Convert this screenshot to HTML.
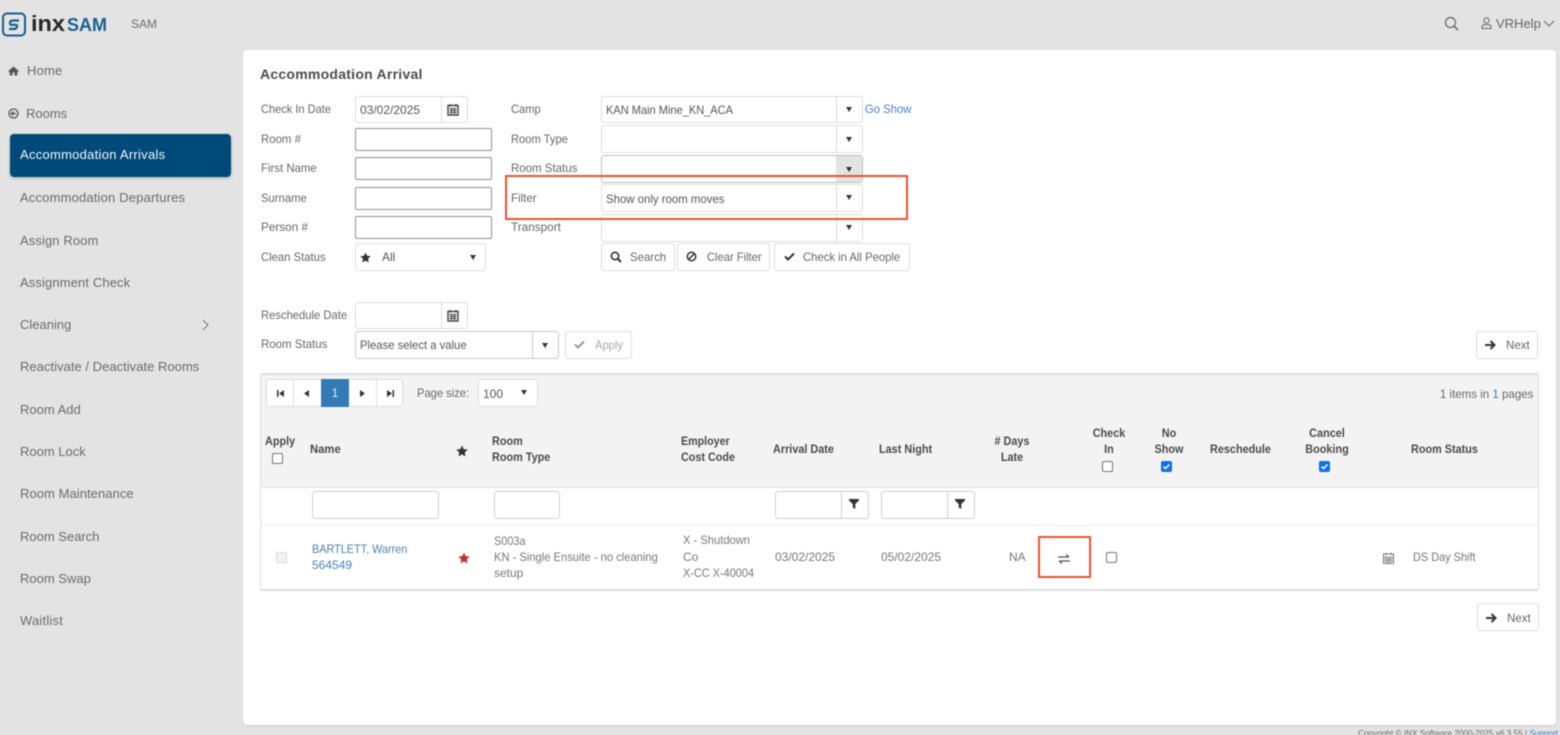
<!DOCTYPE html>
<html><head><meta charset="utf-8"><title>Accommodation Arrival</title>
<style>
html,body{margin:0;padding:0;width:1560px;height:735px;overflow:hidden}
body{background:#e4e3e3;position:relative;font-family:"Liberation Sans",sans-serif;font-size:12px;color:#6f6f6f}
#r{position:absolute;left:0;top:0;width:1560px;height:735px;overflow:hidden;filter:blur(.45px)}
.t{position:absolute;white-space:nowrap;line-height:16px;height:16px;transform:scaleX(var(--x,1));transform-origin:0 50%}
.s{font-size:13px;color:#6b6b6b}
.b{font-weight:bold;color:#4a4a4a;--x:.905}
.c{text-align:center;transform-origin:50% 50%}
.l{color:#666}
.bx{position:absolute;box-sizing:border-box;background:#fff;border:1px solid #dcdcdc;border-radius:3px}
.in{border-color:#8f8f8f;border-radius:2px}
.div{position:absolute;top:0;bottom:0;width:1px;background:#dcdcdc}
.ar{position:absolute;width:0;height:0;border-left:3.5px solid transparent;border-right:3.5px solid transparent;border-top:5px solid #333}
svg{position:absolute;overflow:visible}
.cb{position:absolute;box-sizing:border-box;width:11px;height:11px;border:1px solid #767676;border-radius:2px;background:#fff}
.cc{position:absolute;box-sizing:border-box;width:11px;height:11px;border-radius:2px;background:#0f6fe8}
.red{position:absolute;box-sizing:border-box;border:2px solid #ef5030}
a{color:#337ab7;text-decoration:none}
</style></head><body><div id="r">

<!-- top bar -->
<svg style="left:2px;top:12px" width="24" height="25" viewBox="0 0 24 25"><rect x="1" y="1.500" width="22" height="22" rx="4" fill="none" stroke="#15608f" stroke-width="2"/><path d="M17 8.500H11Q8 8.500 8 11T11 12.800H13.500Q16 13 15 15T12 17H7" fill="none" stroke="#15608f" stroke-width="2.200"/></svg>
<div class="t" style="left:31px;top:14px;height:20px;line-height:20px;font-size:22px;font-weight:bold;color:#262626;--x:1.07">inx</div>
<div class="t" style="left:67px;top:15px;height:20px;line-height:20px;font-size:18px;font-weight:bold;color:#17608f">SAM</div>
<div class="t" style="left:131px;top:16px;color:#6f6f6f">SAM</div>
<svg style="left:1444px;top:16px" width="16" height="16" viewBox="0 0 16 16"><circle cx="6.500" cy="6.500" r="5" fill="none" stroke="#666" stroke-width="1.200"/><path d="M10.300 10.300L14 14" stroke="#666" stroke-width="1.500"/></svg>
<svg style="left:1481px;top:17px" width="11" height="13" viewBox="0 0 11 13"><circle cx="5.500" cy="3.500" r="2.600" fill="none" stroke="#666"/><path d="M1 11.500V10Q1 7.800 3.500 7.800H7.500Q10 7.800 10 10V11.500Z" fill="none" stroke="#666"/></svg>
<div class="t" style="left:1496px;top:16px;font-size:13px;color:#666">VRHelp</div>
<svg style="left:1543px;top:20px" width="12" height="8" viewBox="0 0 12 8"><path d="M1 1L6 6L11 1" fill="none" stroke="#666" stroke-width="1"/></svg>

<!-- sidebar -->
<svg style="left:8px;top:66px" width="11" height="10" viewBox="0 0 11 10"><path d="M5.500 .500L0 5.200L.7 6L1.700 5.200V9.500H4.500V6.500H6.500V9.500H9.300V5.200L10.300 6L11 5.200Z" fill="#555"/></svg>
<div class="t s" style="left:27px;top:63px;letter-spacing:.2px">Home</div>
<svg style="left:8px;top:108px" width="11" height="11" viewBox="0 0 11 11"><circle cx="5.500" cy="5.500" r="4.500" fill="none" stroke="#555" stroke-width="1.300"/><path d="M8 5.500H4M5.500 3.500L3.300 5.500L5.500 7.500" fill="none" stroke="#555" stroke-width="1.200"/></svg>
<div class="t s" style="left:26px;top:106px">Rooms</div>
<div style="position:absolute;left:10px;top:134px;width:221px;height:43px;background:#004a7a;border-radius:4px;box-shadow:0 1px 3px rgba(0,0,0,.25)"></div>
<div class="t s" style="left:20px;top:147px;color:#f2f6f9;letter-spacing:.27px">Accommodation Arrivals</div>
<div class="t s" style="left:20px;top:190px;letter-spacing:.17px">Accommodation Departures</div>
<div class="t s" style="left:20px;top:233px;letter-spacing:.1px">Assign Room</div>
<div class="t s" style="left:20px;top:275px;letter-spacing:.12px">Assignment Check</div>
<div class="t s" style="left:20px;top:317px">Cleaning</div>
<svg style="left:202px;top:319px" width="7" height="12" viewBox="0 0 7 12"><path d="M1 1L6 6L1 11" fill="none" stroke="#777" stroke-width="1"/></svg>
<div class="t s" style="left:20px;top:359px;letter-spacing:.03px">Reactivate / Deactivate Rooms</div>
<div class="t s" style="left:20px;top:402px">Room Add</div>
<div class="t s" style="left:20px;top:444px">Room Lock</div>
<div class="t s" style="left:20px;top:486px;letter-spacing:.06px">Room Maintenance</div>
<div class="t s" style="left:20px;top:529px">Room Search</div>
<div class="t s" style="left:20px;top:571px">Room Swap</div>
<div class="t s" style="left:20px;top:613px;letter-spacing:.2px">Waitlist</div>

<!-- card -->
<div style="position:absolute;left:243px;top:50px;width:1313px;height:675px;background:#fff;border-radius:4px;box-shadow:0 1px 2px rgba(0,0,0,.1)"></div>
<div class="t" style="left:260px;top:66px;font-size:14px;font-weight:bold;color:#4d4d4d;letter-spacing:.25px">Accommodation Arrival</div>

<!-- left labels -->
<div class="t l" style="left:261px;top:101px;--x:.92">Check In Date</div>
<div class="t l" style="left:261px;top:131px;--x:.95">Room #</div>
<div class="t l" style="left:261px;top:160px;--x:.95">First Name</div>
<div class="t l" style="left:261px;top:190px;--x:.94">Surname</div>
<div class="t l" style="left:261px;top:219px;--x:.98">Person #</div>
<div class="t l" style="left:261px;top:249px;--x:.94">Clean Status</div>

<div class="bx" style="left:355px;top:96px;width:113px;height:27px"><div class="div" style="left:85px"></div></div>
<div class="t" style="left:360px;top:102px;color:#555">03/02/2025</div>
<svg style="left:447px;top:103px" width="12" height="13" viewBox="0 0 12 13"><path d="M1 2.500H11V12H1ZM3 1V3.500M9 1V3.500" fill="none" stroke="#444" stroke-width="1.400"/><path d="M2.500 5.500h7M2.500 7.500h7M2.500 9.500h7M4.500 5v6M7.500 5v6" stroke="#444" stroke-width=".9"/></svg>
<div class="bx in" style="left:355px;top:128px;width:137px;height:23px"></div>
<div class="bx in" style="left:355px;top:157px;width:137px;height:23px"></div>
<div class="bx in" style="left:355px;top:187px;width:137px;height:23px"></div>
<div class="bx in" style="left:355px;top:216px;width:137px;height:23px"></div>
<div class="bx" style="left:355px;top:243px;width:131px;height:28px"></div>
<svg style="left:360px;top:252px" width="11" height="11" viewBox="0 0 24 24"><path d="M12 1L15.400 8.300L23.500 9.300L17.500 14.800L19.100 22.800L12 18.800L4.900 22.800L6.500 14.800L.5 9.300L8.600 8.300Z" fill="#333"/></svg>
<div class="t" style="left:382px;top:249px;color:#555">All</div>
<div class="ar" style="left:470px;top:255px"></div>

<!-- right labels -->
<div class="t l" style="left:511px;top:101px;--x:.93">Camp</div>
<div class="t l" style="left:511px;top:131px;--x:.93">Room Type</div>
<div class="t l" style="left:511px;top:160px;--x:.956">Room Status</div>
<div class="t l" style="left:511px;top:190px;--x:.96">Filter</div>
<div class="t l" style="left:511px;top:219px;--x:.98">Transport</div>

<div class="bx" style="left:601px;top:96px;width:262px;height:27px"><div class="div" style="left:234px"></div></div>
<div class="ar" style="left:846px;top:107px"></div>
<div class="t" style="left:606px;top:102px;color:#555;--x:.92">KAN Main Mine_KN_ACA</div>
<a class="t" style="left:865px;top:101px;color:#4a7fc9;--x:.94">Go Show</a>
<div class="bx" style="left:601px;top:125px;width:262px;height:28px"><div class="div" style="left:234px"></div></div>
<div class="ar" style="left:846px;top:137px"></div>
<div class="bx" style="left:601px;top:155px;width:262px;height:28px;border-color:#bdbdbd"><div style="position:absolute;left:234px;top:0;bottom:0;right:0;background:#e3e3e3"></div></div>
<div class="ar" style="left:846px;top:167px"></div>
<div class="bx" style="left:601px;top:214px;width:262px;height:28px"><div class="div" style="left:234px"></div></div>
<div class="ar" style="left:846px;top:225px"></div>
<div class="bx" style="left:601px;top:184px;width:262px;height:28px"><div class="div" style="left:234px"></div></div>
<div class="ar" style="left:846px;top:195px"></div>
<div class="t" style="left:606px;top:191px;color:#555;--x:.95">Show only room moves</div>
<div class="red" style="left:505px;top:175px;width:403px;height:45px"></div>

<!-- buttons -->
<div class="bx" style="left:601px;top:243px;width:74px;height:28px"></div>
<svg style="left:610px;top:251px" width="12" height="12" viewBox="0 0 12 12"><circle cx="5" cy="5" r="3.700" fill="none" stroke="#333" stroke-width="1.600"/><path d="M7.800 7.800L11 11" stroke="#333" stroke-width="2"/></svg>
<div class="t" style="left:630px;top:249px;color:#666;--x:.95">Search</div>
<div class="bx" style="left:677px;top:243px;width:93px;height:28px"></div>
<svg style="left:686px;top:251px" width="11" height="11" viewBox="0 0 11 11"><circle cx="5.500" cy="5.500" r="4.200" fill="none" stroke="#333" stroke-width="1.500"/><path d="M2.500 8.500L8.500 2.500" stroke="#333" stroke-width="1.500"/></svg>
<div class="t" style="left:707px;top:249px;color:#666;--x:.93">Clear Filter</div>
<div class="bx" style="left:774px;top:243px;width:136px;height:28px"></div>
<svg style="left:784px;top:252px" width="11" height="9" viewBox="0 0 11 9"><path d="M1 4.500L4 7.500L10 1.500" fill="none" stroke="#333" stroke-width="2"/></svg>
<div class="t" style="left:803px;top:249px;color:#666;--x:.94">Check in All People</div>

<!-- reschedule -->
<div class="t l" style="left:261px;top:307px;--x:.935">Reschedule Date</div>
<div class="t l" style="left:261px;top:336px;--x:.956">Room Status</div>
<div class="bx" style="left:355px;top:302px;width:113px;height:27px"><div class="div" style="left:85px"></div></div>
<svg style="left:447px;top:309px" width="12" height="13" viewBox="0 0 12 13"><path d="M1 2.500H11V12H1ZM3 1V3.500M9 1V3.500" fill="none" stroke="#444" stroke-width="1.400"/><path d="M2.500 5.500h7M2.500 7.500h7M2.500 9.500h7M4.500 5v6M7.500 5v6" stroke="#444" stroke-width=".9"/></svg>
<div class="bx" style="left:355px;top:331px;width:204px;height:28px;border-color:#c8c8c8"><div class="div" style="left:176px;background:#c8c8c8"></div></div>
<div class="t" style="left:360px;top:337px;color:#555;--x:.94">Please select a value</div>
<div class="ar" style="left:542px;top:343px"></div>
<div class="bx" style="left:565px;top:331px;width:67px;height:28px"></div>
<svg style="left:574px;top:340px" width="11" height="9" viewBox="0 0 11 9"><path d="M1 4.500L4 7.500L10 1.500" fill="none" stroke="#999" stroke-width="2"/></svg>
<div class="t" style="left:595px;top:337px;color:#aaa;--x:.93">Apply</div>
<div class="bx" style="left:1476px;top:331px;width:62px;height:28px"></div>
<svg style="left:1485px;top:340px" width="11" height="10" viewBox="0 0 11 10"><path d="M0 5H9M5.500 1L9.500 5L5.500 9" fill="none" stroke="#333" stroke-width="2"/></svg>
<div class="t" style="left:1506px;top:337px;color:#666;--x:.96">Next</div>

<!-- grid -->
<div style="position:absolute;box-sizing:border-box;left:260px;top:373px;width:1279px;height:218px;border:1px solid #e0e0e0;border-top:2px solid #dedede;border-bottom:2px solid #dedede;border-radius:2px"></div>
<div style="position:absolute;left:261px;top:375px;width:1277px;height:112px;background:#f3f3f3"></div>
<div style="position:absolute;left:261px;top:487px;width:1277px;height:1px;background:#e2e2e2"></div>
<div style="position:absolute;left:261px;top:525px;width:1277px;height:1px;background:#ebebeb"></div>

<!-- pager -->
<div class="bx" style="left:266px;top:379px;width:137px;height:28px"></div>
<div style="position:absolute;left:293px;top:380px;width:1px;height:26px;background:#dcdcdc"></div>
<div style="position:absolute;left:321px;top:379px;width:28px;height:28px;background:#337ab7"></div>
<div style="position:absolute;left:376px;top:380px;width:1px;height:26px;background:#dcdcdc"></div>
<div class="t c" style="left:321px;top:385px;width:28px;color:#dfeaf4">1</div>
<svg style="left:277px;top:390px" width="7" height="7" viewBox="0 0 7 7"><path d="M0 0H1.500V7H0ZM7 0V7L2 3.500Z" fill="#333"/></svg>
<svg style="left:304px;top:390px" width="6" height="7" viewBox="0 0 6 7"><path d="M5 0V7L0 3.500Z" fill="#333"/></svg>
<svg style="left:360px;top:390px" width="6" height="7" viewBox="0 0 6 7"><path d="M0 0V7L5 3.500Z" fill="#333"/></svg>
<svg style="left:387px;top:390px" width="7" height="7" viewBox="0 0 7 7"><path d="M0 0V7L5 3.500ZM5.500 0H7V7H5.500Z" fill="#333"/></svg>
<div class="t" style="left:417px;top:385px;color:#666;--x:.93">Page size:</div>
<div class="bx" style="left:478px;top:379px;width:60px;height:28px"></div>
<div class="t" style="left:483px;top:386px;color:#555">100</div>
<div class="ar" style="left:521px;top:390px"></div>
<div class="t" style="right:27px;top:386px;color:#666;--x:.96;transform-origin:100% 50%">1 items in <a style="color:#337ab7">1</a> pages</div>

<!-- headers -->
<div class="t b" style="left:265px;top:433px">Apply</div>
<div class="cb" style="left:272px;top:453px"></div>
<div class="t b" style="left:310px;top:441px;--x:.94">Name</div>
<svg style="left:456px;top:445px" width="12" height="12" viewBox="0 0 24 24"><path d="M12 1L15.400 8.300L23.500 9.300L17.500 14.800L19.100 22.800L12 18.800L4.900 22.800L6.500 14.800L.5 9.300L8.600 8.300Z" fill="#333"/></svg>
<div class="t b" style="left:492px;top:433px">Room</div>
<div class="t b" style="left:492px;top:449px">Room Type</div>
<div class="t b" style="left:681px;top:433px;--x:.89">Employer</div>
<div class="t b" style="left:681px;top:449px;--x:.9">Cost Code</div>
<div class="t b" style="left:773px;top:441px">Arrival Date</div>
<div class="t b" style="left:879px;top:441px">Last Night</div>
<div class="t b c" style="left:982px;top:433px;width:60px">&#35; Days</div>
<div class="t b c" style="left:982px;top:449px;width:60px">Late</div>
<div class="t b c" style="left:1079px;top:425px;width:60px">Check</div>
<div class="t b c" style="left:1079px;top:441px;width:60px">In</div>
<div class="cb" style="left:1102px;top:461px"></div>
<div class="t b c" style="left:1139px;top:425px;width:60px">No</div>
<div class="t b c" style="left:1139px;top:441px;width:60px">Show</div>
<div class="cc" style="left:1161px;top:461px"></div>
<svg style="left:1161px;top:461px" width="11" height="11" viewBox="0 0 11 11"><path d="M2.500 5.500L4.500 7.500L8.500 3.500" fill="none" stroke="#fff" stroke-width="1.500"/></svg>
<div class="t b" style="left:1210px;top:441px">Reschedule</div>
<div class="t b c" style="left:1297px;top:425px;width:60px">Cancel</div>
<div class="t b c" style="left:1297px;top:441px;width:60px">Booking</div>
<div class="cc" style="left:1319px;top:461px"></div>
<svg style="left:1319px;top:461px" width="11" height="11" viewBox="0 0 11 11"><path d="M2.500 5.500L4.500 7.500L8.500 3.500" fill="none" stroke="#fff" stroke-width="1.500"/></svg>
<div class="t b" style="left:1411px;top:441px">Room Status</div>

<!-- filter row -->
<div class="bx" style="left:312px;top:491px;width:127px;height:28px;border-color:#cfcfcf"></div>
<div class="bx" style="left:494px;top:491px;width:66px;height:28px;border-color:#cfcfcf"></div>
<div class="bx" style="left:775px;top:491px;width:94px;height:28px;border-color:#cfcfcf"><div class="div" style="left:65px;background:#cfcfcf"></div></div>
<svg style="left:849px;top:499px" width="10" height="10" viewBox="0 0 10 10"><path d="M0 0H10V1.500L6.300 5V10L3.700 8.500V5L0 1.500Z" fill="#333"/></svg>
<div class="bx" style="left:881px;top:491px;width:94px;height:28px;border-color:#cfcfcf"><div class="div" style="left:65px;background:#cfcfcf"></div></div>
<svg style="left:955px;top:499px" width="10" height="10" viewBox="0 0 10 10"><path d="M0 0H10V1.500L6.300 5V10L3.700 8.500V5L0 1.500Z" fill="#333"/></svg>

<!-- data row -->
<div style="position:absolute;box-sizing:border-box;left:276px;top:552px;width:11px;height:11px;border:1px solid #d8d8d8;border-radius:2px;background:#f2f2f2"></div>
<a class="t" style="left:312px;top:541px;color:#4a83b8;--x:.905">BARTLETT, Warren</a>
<a class="t" style="left:312px;top:557px;color:#4a83b8">564549</a>
<svg style="left:458px;top:552px" width="12" height="12" viewBox="0 0 24 24"><path d="M12 1L15.400 8.300L23.500 9.300L17.500 14.800L19.100 22.800L12 18.800L4.900 22.800L6.500 14.800L.5 9.300L8.600 8.300Z" fill="#c9302c"/></svg>
<div class="t" style="left:494px;top:533px;color:#777;--x:.91">S003a</div>
<div class="t" style="left:494px;top:549px;color:#777;--x:.93">KN - Single Ensuite - no cleaning</div>
<div class="t" style="left:494px;top:565px;color:#777">setup</div>
<div class="t" style="left:683px;top:532px;color:#777;--x:.93">X - Shutdown</div>
<div class="t" style="left:683px;top:549px;color:#777">Co</div>
<div class="t" style="left:683px;top:565px;color:#777;--x:.91">X-CC X-40004</div>
<div class="t" style="left:775px;top:549px;color:#777">03/02/2025</div>
<div class="t" style="left:881px;top:549px;color:#777">05/02/2025</div>
<div class="t" style="left:1009px;top:549px;color:#777">NA</div>
<div class="red" style="left:1038px;top:536px;width:53px;height:42px"></div>
<svg style="left:1058px;top:554px" width="12" height="10" viewBox="0 0 12 10"><path d="M0 3H11M8 .5L11 3M12 7H1M4 9.500L1 7" fill="none" stroke="#555" stroke-width="1.200"/></svg>
<div class="cb" style="left:1106px;top:552px"></div>
<svg style="left:1383px;top:552px" width="11" height="12" viewBox="0 0 11 12"><path d="M.5 2H10.500V11.500H.5ZM3 .5V3M8 .5V3" fill="none" stroke="#777"/><path d="M1 5h9M1 7h9M1 9h9M3.500 4.500v7M5.500 4.500v7M7.500 4.500v7" stroke="#777" stroke-width=".8"/></svg>
<div class="t" style="left:1413px;top:549px;color:#777;--x:.91">DS Day Shift</div>

<div class="bx" style="left:1477px;top:603px;width:62px;height:28px"></div>
<svg style="left:1486px;top:613px" width="11" height="10" viewBox="0 0 11 10"><path d="M0 5H9M5.500 1L9.500 5L5.500 9" fill="none" stroke="#333" stroke-width="2"/></svg>
<div class="t" style="left:1507px;top:610px;color:#666;--x:.96">Next</div>

<div class="t" style="right:2px;top:726px;font-size:8.200px;color:#666">Copyright © INX Software 2000-2025 v6.3.55 | <a style="color:#337ab7">Support</a></div>
</div></body></html>
